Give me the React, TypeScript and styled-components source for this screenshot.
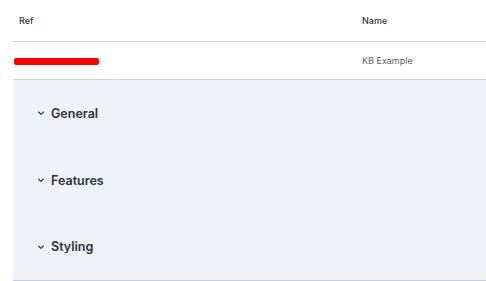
import React from 'react';
import styled, { createGlobalStyle } from 'styled-components';

const GlobalStyle = createGlobalStyle`
  html, body {
    margin: 0;
    padding: 0;
    background: #ffffff;
    font-family: Inter, "Noto Sans", sans-serif;
  }
`;

const Page = styled.div`
  padding-left: 13px;
`;

const Row = styled.div<{ $head?: boolean }>`
  display: grid;
  grid-template-columns: 343px 1fr;
  align-items: center;
  height: ${(p) => (p.$head ? '41px' : '37px')};
  border-bottom: 1px solid #cfd3da;
`;

const Cell = styled.div<{ $head?: boolean }>`
  padding-left: 6px;
  font-size: 9px;
  font-weight: ${(p) => (p.$head ? 500 : 400)};
  color: ${(p) => (p.$head ? '#2f3443' : '#5a5f6b')};
`;

const Redacted = styled.span`
  display: block;
  margin-left: -5px;
  margin-top: 1px;
  width: 85px;
  height: 7px;
  border-radius: 2px;
  background: #ff0000;
`;

const Panel = styled.div`
  display: flex;
  flex-direction: column;
  height: 200px;
  background: #eff2f6;
  border-bottom: 1px solid #c3cfdd;
`;

const Section = styled.div`
  flex: 1;
  display: flex;
  align-items: center;
  gap: 6px;
  padding-left: 24px;
  font-size: 12.5px;
  font-weight: 600;
  color: #2c3144;
`;

const Chevron = () => (
  <svg width="8" height="8" viewBox="0 0 8 8" fill="none">
    <path d="M1.5 3 L4 5.3 L6.5 3" stroke="#2c3144" strokeWidth="1.1" strokeLinecap="round" strokeLinejoin="round" />
  </svg>
);

const sections = ['General', 'Features', 'Styling'];

export default function App() {
  return (
    <Page>
      <GlobalStyle />
      <Row $head>
        <Cell $head>Ref</Cell>
        <Cell $head>Name</Cell>
      </Row>
      <Row>
        <Cell>
          <Redacted />
        </Cell>
        <Cell>KB Example</Cell>
      </Row>
      <Panel>
        {sections.map((s) => (
          <Section key={s}>
            <Chevron />
            {s}
          </Section>
        ))}
      </Panel>
    </Page>
  );
}
